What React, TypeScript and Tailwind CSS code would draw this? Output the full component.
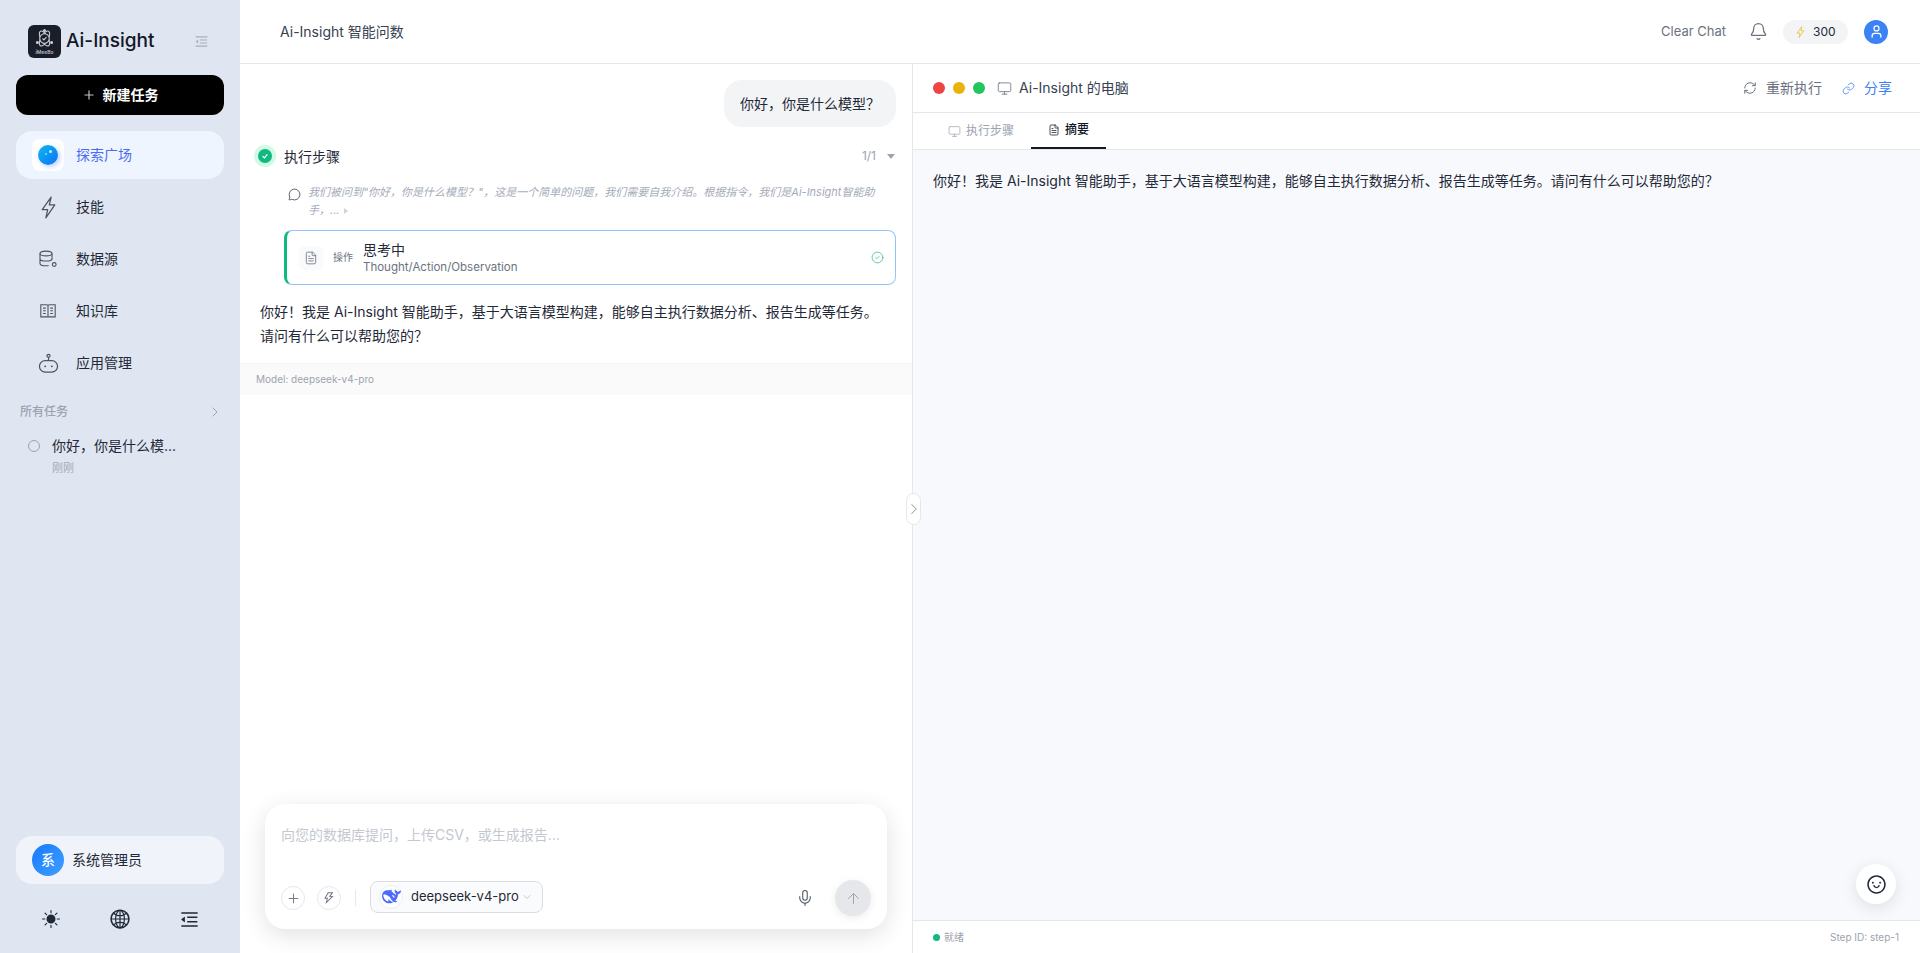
import React from 'react';
import { Plus, ChevronRight, ChevronDown, Monitor, Mic, ArrowUp, CircleCheck, MessageCircle, RefreshCw, Link, User, Bell, FileText } from 'lucide-react';
import { AiOutlineGlobal, AiOutlineMenuFold, AiOutlineSmile, AiOutlineThunderbolt } from 'react-icons/ai';
import { BsSunFill } from 'react-icons/bs';

const LogoMark = () => (
  <div className="w-[33px] h-[33px] rounded-md bg-[#1a1e29] flex flex-col items-center justify-center">
    <svg viewBox="0 0 24 24" className="w-[19px] h-[19px] text-[#c9ccd4]" fill="none" stroke="currentColor" strokeWidth="1.4">
      <ellipse cx="12" cy="12" rx="10.500" ry="4.500" transform="rotate(60 12 12)" />
      <ellipse cx="12" cy="12" rx="10.500" ry="4.500" transform="rotate(-60 12 12)" />
      <circle cx="12" cy="12" r="6" fill="#1a1e29" />
      <path d="M9.500 12l1.800 1.800 3.200-3.400" />
      <circle cx="12" cy="2" r="1.200" fill="currentColor" />
      <circle cx="3" cy="17" r="1.200" fill="currentColor" />
      <circle cx="21" cy="17" r="1.200" fill="currentColor" />
    </svg>
    <span className="text-[5px] leading-[6px] mt-[1px] text-[#b8bcc6] font-semibold">iMeeBo</span>
  </div>
);

const BoltIcon = ({ className }: { className: string }) => (
  <svg viewBox="0 0 14 22" className={className} fill="none" stroke="currentColor" strokeWidth="1.2" strokeLinejoin="round">
    <path d="M9.500 1L1 13h5.200L4.500 21 13 8.500H7.800z" />
  </svg>
);

const DataIcon = () => (
  <svg viewBox="0 0 20 20" className="w-5 h-5 text-[#4b5563]" fill="none" stroke="currentColor" strokeWidth="1.100">
    <ellipse cx="8" cy="4.500" rx="6" ry="2.400" />
    <path d="M2 4.500v10c0 1.300 2.700 2.300 6 2.300 1 0 1.800-.1 2.600-.3M14 4.500v6.500M2 9.700c0 1.300 2.700 2.300 6 2.300s6-1 6-2.300" />
    <circle cx="16.200" cy="15.500" r="1.900" />
  </svg>
);

const BookIcon = () => (
  <svg viewBox="0 0 20 20" className="w-[18px] h-[18px] text-[#4b5563]" fill="none" stroke="currentColor" strokeWidth="1.200">
    <path d="M2 3h6.500c.8 0 1.500.6 1.500 1.400C10 3.600 10.700 3 11.500 3H18v13.500h-6.500c-.8 0-1.500.3-1.500.8 0-.5-.7-.8-1.500-.8H2zM10 4.500v12.500" />
    <path d="M4.500 6.800h3M4.500 9.800h3M4.500 12.800h3M12.500 6.800h3M12.500 9.800h3M12.500 12.800h3" />
  </svg>
);

const BotIcon = () => (
  <svg viewBox="0 0 22 22" className="w-[21px] h-[21px] text-[#4b5563]" fill="none" stroke="currentColor" strokeWidth="1.300">
    <circle cx="11" cy="3" r="1.600" />
    <path d="M11 4.600V8" />
    <rect x="1.500" y="8" width="19" height="12" rx="6" />
    <circle cx="7.500" cy="14" r="1" fill="currentColor" stroke="none" />
    <circle cx="14.500" cy="14" r="1" fill="currentColor" stroke="none" />
  </svg>
);

const navItems = [
  { label: '技能', icon: <BoltIcon className="w-[15px] h-[23px] text-[#4b5563]" /> },
  { label: '数据源', icon: <DataIcon /> },
  { label: '知识库', icon: <BookIcon /> },
  { label: '应用管理', icon: <BotIcon /> },
];

const Whale = () => (
  <svg viewBox="0 0 24 24" className="w-[19px] h-[19px]" fill="#4d6bfe">
    <path d="M23.748 4.482c-.254-.124-.364.113-.512.234-.051.039-.094.09-.137.136-.372.397-.806.657-1.373.626-.829-.046-1.537.214-2.163.848-.133-.782-.575-1.248-1.247-1.548-.352-.156-.708-.311-.955-.65-.172-.241-.219-.51-.305-.774-.055-.16-.11-.323-.293-.35-.2-.031-.278.136-.356.276-.313.572-.434 1.202-.422 1.84.027 1.436.633 2.58 1.838 3.393.137.093.172.187.129.323-.082.28-.18.552-.266.833-.055.179-.137.217-.329.14a5.526 5.526 0 01-1.736-1.18c-.857-.828-1.631-1.742-2.597-2.458a11.365 11.365 0 00-.689-.471c-.985-.957.13-1.743.388-1.836.27-.098.093-.432-.779-.428-.872.004-1.67.295-2.687.684a3.055 3.055 0 01-.465.137 9.597 9.597 0 00-2.883-.102c-1.885.21-3.39 1.102-4.497 2.623C.082 8.606-.231 10.684.152 12.85c.403 2.284 1.569 4.175 3.36 5.653 1.858 1.533 3.997 2.284 6.438 2.14 1.482-.085 3.133-.284 4.994-1.86.47.234.962.327 1.78.397.63.059 1.236-.03 1.705-.128.735-.156.684-.837.419-.961-2.155-1.004-1.682-.595-2.113-.926 1.096-1.296 2.746-2.642 3.392-7.003.05-.347.007-.565 0-.845-.004-.17.035-.237.23-.256a4.173 4.173 0 001.545-.475c1.396-.763 1.96-2.015 2.093-3.517.02-.23-.004-.467-.247-.588zM11.581 18c-2.089-1.642-3.102-2.183-3.52-2.16-.392.024-.321.471-.235.763.09.288.207.486.371.739.114.167.192.416-.113.603-.673.416-1.842-.14-1.897-.167-1.361-.802-2.5-1.86-3.301-3.307-.774-1.393-1.224-2.887-1.298-4.482-.02-.386.093-.522.477-.592a4.696 4.696 0 011.529-.039c2.132.312 3.946 1.265 5.468 2.774.868.86 1.525 1.887 2.202 2.891.72 1.066 1.494 2.082 2.48 2.914.348.292.625.514.891.677-.802.09-2.14.11-3.054-.614zm1-6.44a.306.306 0 01.415-.287.302.302 0 01.2.288.306.306 0 01-.31.307.303.303 0 01-.304-.308zm3.11 1.596c-.2.081-.399.151-.59.16a1.245 1.245 0 01-.798-.254c-.274-.23-.47-.358-.552-.758a1.73 1.73 0 01.016-.588c.07-.327-.008-.537-.239-.727-.187-.156-.426-.199-.688-.199a.559.559 0 01-.254-.078c-.11-.054-.2-.19-.114-.358.028-.054.16-.186.192-.21.356-.202.767-.136 1.146.016.352.144.618.408 1.001.782.391.451.462.576.685.914.176.265.336.537.445.848.067.195-.019.354-.25.452z" />
  </svg>
);

export default function App() {
  return (
    <div className="flex h-screen w-full overflow-hidden bg-white text-[#1f2937] font-['Inter','Noto_Sans_CJK_SC',sans-serif]">
      {/* Sidebar */}
      <aside className="w-[240px] shrink-0 bg-[#e0e6f1] flex flex-col px-4">
        <div className="flex items-center pt-[25px] pl-3 pr-[15px]">
          <LogoMark />
          <span className="ml-[5px] mb-[2px] text-[19px] leading-[31px] font-medium text-[#111827]">Ai-Insight</span>
          <AiOutlineMenuFold size={15} className="ml-auto text-[#a9afbc]" />
        </div>

        <button className="mt-[17px] h-10 rounded-xl bg-black text-white text-sm font-semibold flex items-center justify-center gap-[7px]">
          <Plus size={14} className="text-[#c4c4c4]" />
          新建任务
        </button>

        <nav className="mt-4 flex flex-col gap-1">
          <div className="h-12 rounded-2xl bg-[#eff5ff] flex items-center gap-3 px-4">
            <span className="w-8 h-8 rounded-lg bg-white flex items-center justify-center">
              <span className="w-5 h-5 rounded-full bg-gradient-to-br from-[#17b8f0] to-[#1670f5] shadow-[2px_2px_5px_rgba(60,120,245,0.35)] relative">
                <span className="absolute left-[11px] top-[5px] w-[3px] h-[3px] rounded-full bg-white/80" />
                <span className="absolute left-[7px] top-[8px] w-[2px] h-[2px] rounded-full bg-white/60" />
              </span>
            </span>
            <span className="text-sm text-[#4a6cf0]">探索广场</span>
          </div>
          {navItems.map(item => (
            <div key={item.label} className="h-12 rounded-2xl flex items-center gap-3 px-4">
              <span className="w-8 h-8 flex items-center justify-center">{item.icon}</span>
              <span className="text-sm text-[#1f2937]">{item.label}</span>
            </div>
          ))}
        </nav>

        <div className="mt-[17px] flex items-center justify-between pl-1 pr-[1px]">
          <span className="text-xs font-medium text-[#9ca3af]">所有任务</span>
          <ChevronRight size={16} strokeWidth={1.5} className="text-[#9ca3af]" />
        </div>

        <div className="mt-[16px] flex pl-3 gap-3">
          <span className="mt-1 w-3 h-3 rounded-full border border-[#9ca3af] shrink-0" />
          <div>
            <div className="text-sm leading-5 text-[#1f2937]">你好，你是什么模...</div>
            <div className="mt-1 text-[11px] leading-4 text-[#a4abb8]">刚刚</div>
          </div>
        </div>

        <div className="mt-auto h-12 rounded-2xl bg-[#f0f4fa] flex items-center px-4 gap-2">
          <span className="w-8 h-8 rounded-full bg-gradient-to-br from-[#1677ff] to-[#40a0ff] text-white text-sm font-medium flex items-center justify-center">系</span>
          <span className="text-sm text-[#1f2937]">系统管理员</span>
        </div>

        <div className="mt-[23px] mb-[22px] grid grid-cols-3 justify-items-center items-center h-6 text-[#1f2937]">
          <BsSunFill size={18} />
          <AiOutlineGlobal size={22} />
          <AiOutlineMenuFold size={21} />
        </div>
      </aside>

      {/* Main */}
      <main className="flex-1 min-w-0 flex flex-col">
        <header className="h-16 shrink-0 border-b border-[#e5e7eb] flex items-center pl-10 pr-8">
          <span className="text-sm text-[#374151]">Ai-Insight 智能问数</span>
          <div className="ml-auto flex items-center">
            <span className="text-[13px] text-[#6b7280]">Clear Chat</span>
            <Bell size={19} strokeWidth={1.6} className="ml-[23px] text-[#6b7280]" />
            <span className="ml-[15px] w-[65px] h-6 rounded-full bg-[#f3f4f6] flex items-center pl-[13px] gap-2 text-xs text-[#1f2937]">
              <BoltIcon className="w-[9px] h-3 text-[#eab308]" />
              300
            </span>
            <span className="ml-4 w-6 h-6 rounded-full bg-[#3b82f6] flex items-center justify-center">
              <User size={15} className="text-white" />
            </span>
          </div>
        </header>

        <div className="flex-1 min-h-0 flex relative">
          {/* Chat column */}
          <section className="w-[673px] shrink-0 border-r border-[#e5e7eb] flex flex-col">
            <div className="flex-1 min-h-0">
              <div className="flex justify-end pt-4 pr-4">
                <div className="h-[47px] px-4 flex items-center rounded-[18px] bg-[#f3f4f6] text-sm text-[#1f2937]">你好，你是什么模型？</div>
              </div>

              <div className="pl-[14px] pr-4 mt-[18px]">
                <div className="flex items-center h-[22px]">
                  <span className="w-[22px] h-[22px] rounded-full bg-[#d1fae5] flex items-center justify-center">
                    <span className="w-[14px] h-[14px] rounded-full bg-[#10b981] flex items-center justify-center">
                      <svg viewBox="0 0 10 10" className="w-2 h-2" fill="none" stroke="#fff" strokeWidth="1.6"><path d="M2 5.200l2.200 2.200L8 3" /></svg>
                    </span>
                  </span>
                  <span className="ml-2 mt-[2px] text-sm text-[#1f2937]">执行步骤</span>
                  <span className="ml-auto text-xs text-[#9ca3af]">1/1</span>
                  <span className="ml-[11px] mr-[1px] w-0 h-0 border-x-4 border-x-transparent border-t-[5px] border-t-[#9ca3af]" />
                </div>

                <div className="mt-4 ml-[34px] flex">
                  <MessageCircle size={13} strokeWidth={1.5} className="mt-[5px] shrink-0 text-[#374151]" />
                  <p className="ml-[7px] w-[570px] text-[11px] leading-[18px] italic text-[#a4abb8]">
                    我们被问到"你好，你是什么模型？"，这是一个简单的问题，我们需要自我介绍。根据指令，我们是Ai-Insight智能助手，...
                    <span className="inline-block ml-1 w-0 h-0 border-y-[3px] border-y-transparent border-l-[4px] border-l-[#d1d5db]" />
                  </p>
                </div>

                <div className="mt-[11px] ml-[30px] h-[55px] rounded-lg border border-[#93c5fd] border-l-[3px] border-l-[#10b981] flex items-center pl-3 pr-[11px]">
                  <span className="w-6 h-6 rounded-md bg-[#f8fafc] flex items-center justify-center">
                    <FileText size={14} strokeWidth={1.4} className="text-[#6b7280]" />
                  </span>
                  <span className="ml-[10px] text-[10px] text-[#6b7280]">操作</span>
                  <div className="ml-[10px]">
                    <div className="text-sm leading-[18px] text-[#1f2937]">思考中</div>
                    <div className="text-[11.5px] leading-4 text-[#6b7280]">Thought/Action/Observation</div>
                  </div>
                  <CircleCheck size={13} strokeWidth={1.4} className="ml-auto text-[#34b98a]" />
                </div>

                <p className="mt-[15px] ml-[6px] w-[622px] text-sm leading-6 text-[#1f2937]">
                  你好！我是 Ai-Insight 智能助手，基于大语言模型构建，能够自主执行数据分析、报告生成等任务。请问有什么可以帮助您的？
                </p>
              </div>

              <div className="mt-[15px] h-8 border-t border-[#f3f4f6] bg-[#fafafa] flex items-center pl-4 text-[10px] text-[#9ca3af]">
                Model: deepseek-v4-pro
              </div>
            </div>

            {/* Composer */}
            <div className="mx-[25px] mb-6 h-[125px] shrink-0 rounded-[20px] bg-white shadow-[0_6px_24px_rgba(0,0,0,0.12)] flex flex-col px-4">
              <div className="pt-[21px] text-sm leading-5 text-[#c4c8d0]">向您的数据库提问，上传CSV，或生成报告...</div>
              <div className="mt-auto mb-[13px] flex items-center">
                <span className="w-6 h-6 rounded-full border border-[#e5e7eb] flex items-center justify-center">
                  <Plus size={15} strokeWidth={1.5} className="text-[#6b7280]" />
                </span>
                <span className="ml-3 w-6 h-6 rounded-full border border-[#e5e7eb] flex items-center justify-center">
                  <AiOutlineThunderbolt size={14} className="text-[#6b7280]" />
                </span>
                <span className="ml-[14px] w-px h-4 bg-[#e5e7eb]" />
                <span className="ml-[14px] mb-[3px] w-[173px] h-[32px] rounded-lg border border-[#d9dce1] bg-[#fafbfc] flex items-center pl-2">
                  <span className="w-6 h-6 rounded-full bg-white border border-[#eceef1] flex items-center justify-center">
                    <Whale />
                  </span>
                  <span className="ml-2 text-[13px] text-[#1f2937]">deepseek-v4-pro</span>
                  <ChevronDown size={12} strokeWidth={1.2} className="ml-[2px] text-[#9ca3af]" />
                </span>
                <Mic size={18} strokeWidth={1.4} className="ml-auto text-[#4b5563]" />
                <span className="ml-[21px] w-9 h-9 rounded-full bg-[#e5e7eb] shadow-[0_2px_8px_rgba(0,0,0,0.08)] flex items-center justify-center">
                  <ArrowUp size={17} strokeWidth={1.4} className="text-[#9ca3af]" />
                </span>
              </div>
            </div>
          </section>

          {/* Collapse handle sits over the divider */}
          <button className="absolute z-10 left-[666px] top-[429px] w-[15px] h-8 rounded-full bg-white border border-[#e5e7eb] flex items-center justify-center">
            <ChevronRight size={18} strokeWidth={1.4} className="text-[#9ca3af] shrink-0" />
          </button>

          {/* Computer panel */}
          <section className="flex-1 min-w-0 flex flex-col">
            <div className="h-[49px] shrink-0 border-b border-[#e5e7eb] flex items-center pl-5 pr-7">
              <span className="w-3 h-3 rounded-full bg-[#ef4444]" />
              <span className="ml-2 w-3 h-3 rounded-full bg-[#eab308]" />
              <span className="ml-2 w-3 h-3 rounded-full bg-[#22c55e]" />
              <Monitor size={15} strokeWidth={1.3} className="ml-3 text-[#6b7280]" />
              <span className="ml-[7px] text-sm text-[#374151]">Ai-Insight 的电脑</span>
              <div className="ml-auto flex items-center text-sm">
                <RefreshCw size={14} strokeWidth={1.7} className="text-[#6b7280]" />
                <span className="ml-[9px] text-[#6b7280]">重新执行</span>
                <Link size={13} strokeWidth={1.5} className="ml-[20px] text-[#3b82f6]" />
                <span className="ml-[9px] text-[#3b82f6]">分享</span>
              </div>
            </div>

            <div className="h-[37px] shrink-0 border-b border-[#e5e7eb] flex pl-[18px]">
              <div className="px-[17px] flex items-center gap-[5px] text-xs text-[#9ca3af]">
                <Monitor size={13} strokeWidth={1.3} />
                执行步骤
              </div>
              <div className="px-[17px] flex items-center gap-[5px] text-xs font-medium text-[#111827] border-b-2 border-[#111827]">
                <FileText size={12} strokeWidth={1.5} />
                摘要
              </div>
            </div>

            <div className="flex-1 min-h-0 relative bg-[#f8f9fd] pl-5 pt-[21px] text-sm leading-5 text-[#1f2937]">
              你好！我是 Ai-Insight 智能助手，基于大语言模型构建，能够自主执行数据分析、报告生成等任务。请问有什么可以帮助您的？
              <button className="absolute right-6 bottom-4 w-10 h-10 rounded-full bg-white shadow-[0_4px_16px_rgba(0,0,0,0.1)] flex items-center justify-center">
                <AiOutlineSmile size={21} className="text-[#1f2937]" />
              </button>
            </div>

            <div className="h-[33px] shrink-0 border-t border-[#e5e7eb] flex items-center pl-5 pr-[21px] text-[10px] text-[#9ca3af]">
              <span className="w-[7px] h-[7px] rounded-full bg-[#10b981]" />
              <span className="ml-[4px]">就绪</span>
              <span className="ml-auto">Step ID: step-1</span>
            </div>
          </section>
        </div>
      </main>
    </div>
  );
}
